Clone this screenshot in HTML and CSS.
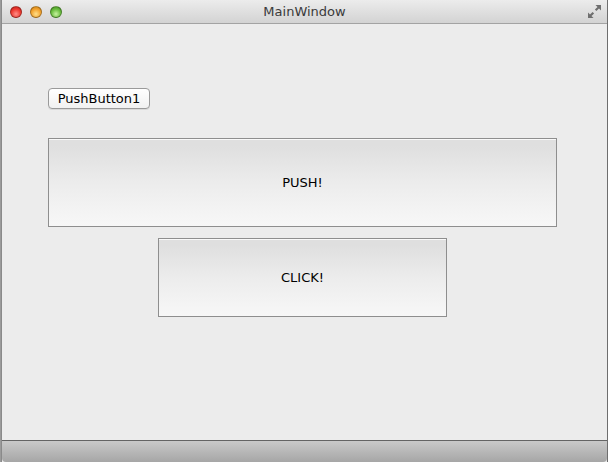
FILE: index.html
```html
<!DOCTYPE html>
<html>
<head>
<meta charset="utf-8">
<link rel="stylesheet" href="styles.css">
</head>
<body>
<div class="window">
  <div class="titlebar">
    <div class="lights">
      <span class="light red"></span>
      <span class="light yellow"></span>
      <span class="light green"></span>
    </div>
    <div class="title">MainWindow</div>
    <svg class="fullscreen" width="15" height="15" viewBox="0 0 15 15">
      <path d="M8.5 1h5.5v5.5l-2-2-2.6 2.6-1.5-1.5 2.6-2.6z" fill="#6f6f6f"/>
      <path d="M6.5 14H1V8.5l2 2 2.6-2.6 1.5 1.5-2.6 2.6z" fill="#6f6f6f"/>
    </svg>
  </div>
  <div class="content">
    <button class="small-btn">PushButton1</button>
    <button class="big-btn push">PUSH!</button>
    <button class="big-btn click">CLICK!</button>
  </div>
  <div class="statusbar"></div>
</div>
</body>
</html>
```

FILE: styles.css
```css
html, body {
  margin: 0;
  padding: 0;
  background: #9b9b9b;
}
.window {
  height: 462px;
  width: 607px;
  margin-left: 1px;
  display: flex;
  flex-direction: column;
  background: #ececec;
  border-left: 1px solid #8a8a8a;
  border-right: 1px solid #6e6e6e;
  box-sizing: border-box;
  font-family: "DejaVu Sans", "Liberation Sans", sans-serif;
}
.titlebar {
  height: 23px;
  flex: none;
  border-bottom: 1px solid #a3a3a3;
  background: linear-gradient(#ececec, #d3d3d3);
  display: flex;
  align-items: center;
  position: relative;
  border-radius: 4px 4px 0 0;
}
.lights {
  display: flex;
  gap: 8px;
  padding-left: 8px;
}
.light {
  width: 12px;
  height: 12px;
  border-radius: 50%;
  box-sizing: border-box;
  border: 1px solid rgba(0,0,0,0.3);
}
.red { background: radial-gradient(circle at 50% 70%, #ff8f88 0, #ee3b32 55%, #bc1a14 100%); }
.yellow { background: radial-gradient(circle at 50% 70%, #ffe08a 0, #f3a431 55%, #c77a0e 100%); }
.green { background: radial-gradient(circle at 50% 70%, #c8f2a0 0, #6bbd40 55%, #3c8a1a 100%); }
.title {
  position: absolute;
  left: 0;
  right: 0;
  text-align: center;
  font-size: 13px;
  color: #3a3a3a;
  top: 4px;
  pointer-events: none;
}
.fullscreen {
  position: absolute;
  right: 5px;
  top: 4px;
}
.content {
  flex: 1;
  padding: 64px 0 0 46px;
  display: flex;
  flex-direction: column;
  align-items: flex-start;
}
button {
  font-family: "DejaVu Sans", "Liberation Sans", sans-serif;
  color: #000;
  padding: 0;
  margin: 0;
}
.small-btn {
  width: 102px;
  height: 21px;
  font-size: 13px;
  border: 1px solid #9a9a9a;
  border-radius: 4px;
  background: linear-gradient(#ffffff, #f1f1f1);
  box-shadow: 0 1px 0 rgba(0,0,0,0.08);
}
.big-btn {
  border: 1px solid #8e8e8e;
  background: linear-gradient(#dfdfdf 8%, #ececec 50%, #f4f4f4 85%, #f7f7f7);
  box-shadow: inset 0 1px 0 #f9f9f9;
  font-size: 13px;
}
.push {
  margin-top: 29px;
  width: 509px;
  height: 89px;
}
.click {
  margin-top: 11px;
  margin-left: 110px;
  width: 289px;
  height: 79px;
}
.statusbar {
  height: 21px;
  flex: none;
  border-top: 1px solid #646464;
  background: linear-gradient(#c9c9c9, #a6a6a6);
  border-radius: 0 0 4px 4px;
}
```
